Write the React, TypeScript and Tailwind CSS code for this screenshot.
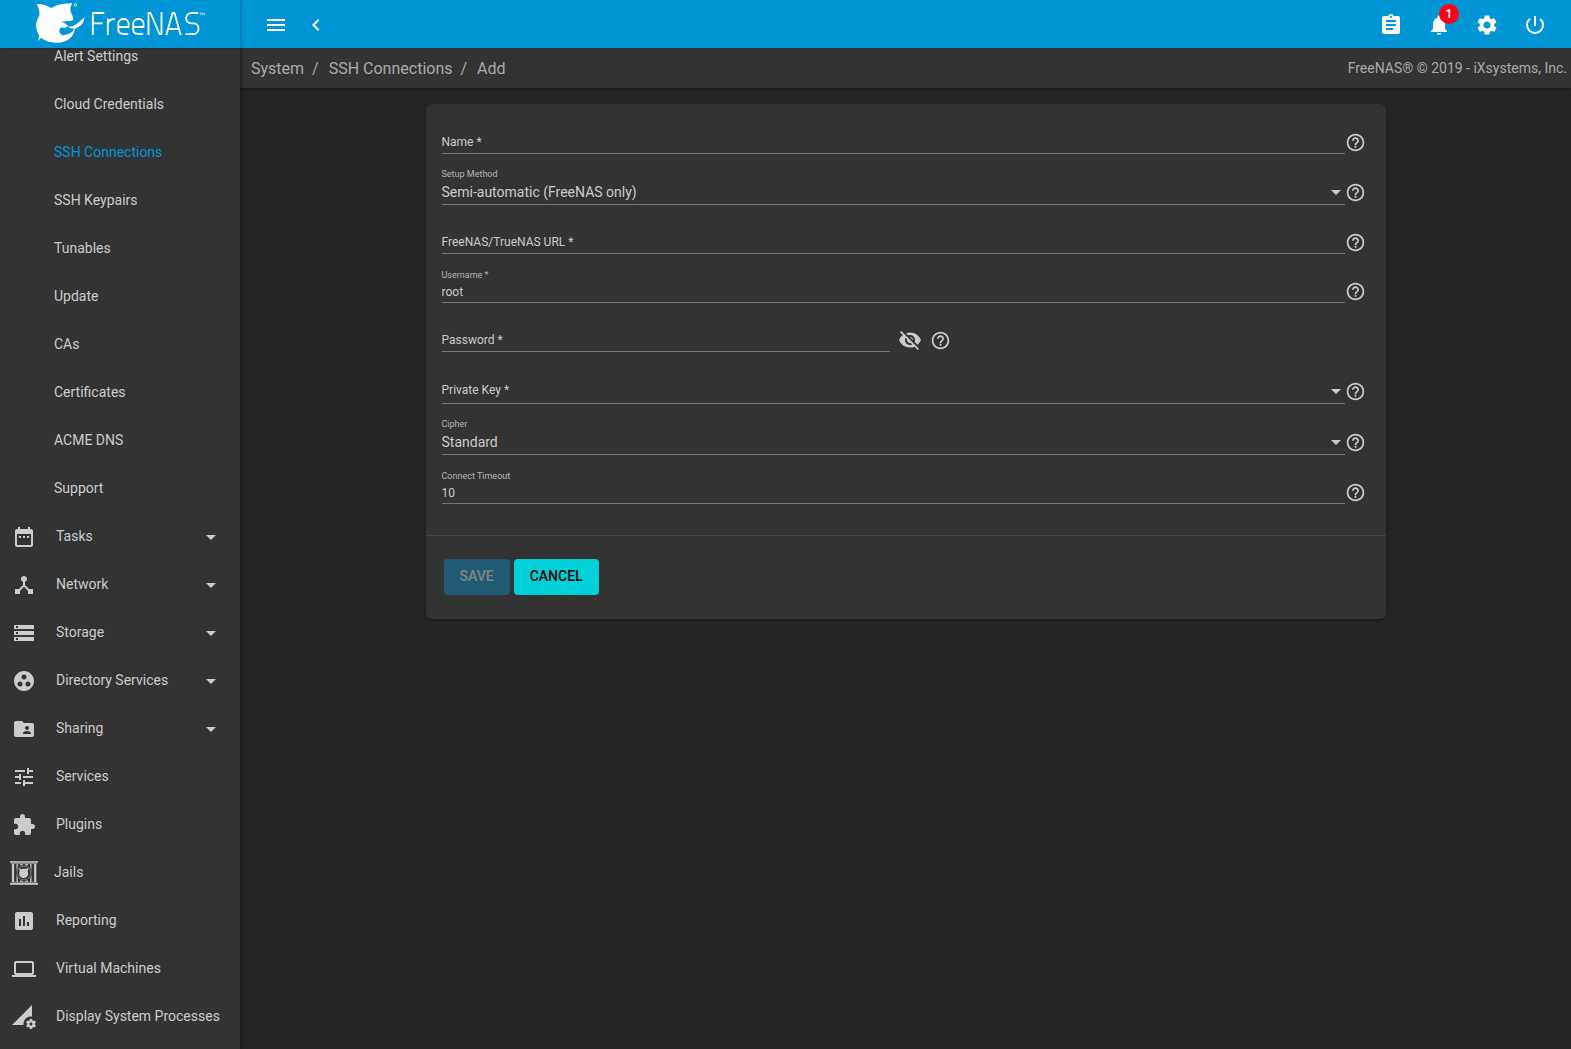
import type { ReactNode } from 'react';
import type { IconType } from 'react-icons';
import {
  MdArrowDropDown,
  MdAssessment,
  MdAssignment,
  MdChevronLeft,
  MdDateRange,
  MdDeviceHub,
  MdExtension,
  MdFolderShared,
  MdGroupWork,
  MdHelpOutline,
  MdLaptop,
  MdMenu,
  MdNotifications,
  MdPermDataSetting,
  MdPowerSettingsNew,
  MdSettings,
  MdStorage,
  MdTune,
  MdVisibilityOff,
} from 'react-icons/md';

const systemLinks = [
  'Alert Settings',
  'Cloud Credentials',
  'SSH Connections',
  'SSH Keypairs',
  'Tunables',
  'Update',
  'CAs',
  'Certificates',
  'ACME DNS',
  'Support',
];

interface Section {
  label: string;
  icon?: IconType;
  expandable?: boolean;
}

const sections: Section[] = [
  { label: 'Tasks', icon: MdDateRange, expandable: true },
  { label: 'Network', icon: MdDeviceHub, expandable: true },
  { label: 'Storage', icon: MdStorage, expandable: true },
  { label: 'Directory Services', icon: MdGroupWork, expandable: true },
  { label: 'Sharing', icon: MdFolderShared, expandable: true },
  { label: 'Services', icon: MdTune },
  { label: 'Plugins', icon: MdExtension },
  { label: 'Jails' },
  { label: 'Reporting', icon: MdAssessment },
  { label: 'Virtual Machines', icon: MdLaptop },
  { label: 'Display System Processes', icon: MdPermDataSetting },
];

function JailIcon() {
  return (
    <svg width="28" height="24" viewBox="0 0 28 24" fill="none" stroke="currentColor">
      <path d="M0 1h28M0 22.900h28" strokeWidth="1.600" />
      <path d="M1 2.600h26M1 21.200h26" strokeWidth="1" opacity=".6" />
      <path d="M3 3v18M25.200 3v18" strokeWidth="2.200" />
      <path d="M7.200 3v18M20.800 3v18" strokeWidth="1.600" opacity=".8" />
      <path d="M11.500 3v18M16.500 3v18" strokeWidth="2.400" />
      <circle cx="14" cy="12" r="8" fill="#333" stroke="none" />
      <circle cx="14" cy="12" r="6.900" strokeWidth=".8" opacity=".6" />
      <path
        d="M9.200 7.200l2.600 1c1.300-.6 2.600-.6 3.600-.2l3.200-1.200-.9 3.200c1.400 4-.4 7-3.800 7-3.600 0-5.700-3.200-4.200-6.800z"
        fill="currentColor"
        stroke="none"
      />
    </svg>
  );
}

function Logo() {
  return (
    <a
      href="#dashboard"
      aria-label="FreeNAS"
      className="flex h-12 w-60 shrink-0 items-center pl-9 text-white shadow-[1px_0_3px_rgba(0,0,0,0.25)]"
    >
      <svg width="170" height="48" viewBox="0 0 170 48" fill="none">
        <path
          d="M.5 4C5 3.600 10 5 15.500 8C21 4.500 28 3.200 36.300 3.300C34.200 6.500 34 10 34.800 12C36.300 14.500 37 17 37.300 20C33 21.800 28.500 20.700 25.500 22.200C29 22.600 30.500 24.500 33 26.800C39 26.500 42.500 22.500 48.300 17.500C48.500 22.500 44.500 26.800 39 28.500C38.500 36 31.500 42.600 21 42.800C14 42.800 8 40.500 5.300 37.800L2 41L3.300 36C1.500 33 0 28.500 0 25.500C.2 21.500 2 17.500 3.500 15C3.500 11 2.500 7 .5 4Z"
          fill="currentColor"
        />
        <path
          d="M25 27.300C22.500 30 22.800 33.500 26.500 35.300C32 34.800 36.800 32.500 38.500 28.800C35 28.800 33 28 31.500 26.300C30 27.800 27.500 28.200 25 27.300Z"
          fill="#0095d5"
        />
        <circle cx="39.500" cy="5" r="1.300" stroke="currentColor" strokeWidth=".8" />
        <g stroke="currentColor" strokeWidth="1.800" strokeLinejoin="round">
          <path d="M56.800 35V13h11.500M56.800 23.300h10" />
          <path d="M71.800 35V18.500M71.800 25c0-4.300 2-6 7-6" />
          <path d="M82.300 27h10.300V23.500c0-6-10.300-6-10.300 0v6c0 4.200 2.500 4.600 10 4.600" />
          <path d="M97.200 27h10.300V23.500c0-6-10.300-6-10.300 0v6c0 4.200 2.500 4.600 10 4.600" />
          <path d="M112.500 35V13h2l9 21h2V12" />
          <path d="M130.300 35l6.200-22h2l6.200 22M132.500 29h10.500" />
          <path d="M162 13h-6c-7.500 0-8 10.300-.5 10.300h2c7 0 6.500 10.900-.5 10.900h-7.500" />
        </g>
        <path d="M163.300 12.800h2.200M164.400 12.800v2.500M166.300 15.300v-2.500l1 1.500 1-1.500v2.500" stroke="currentColor" strokeWidth=".5" />
      </svg>
    </a>
  );
}

function TopButton({ label, children }: { label: string; children: ReactNode }) {
  return (
    <button type="button" aria-label={label} className="relative flex h-12 w-12 items-center justify-center pt-0.5">
      {children}
    </button>
  );
}

function Sidebar() {
  return (
    <nav className="relative z-10 w-60 shrink-0 overflow-hidden bg-[#333] text-sm text-[#ccc] shadow-[1px_0_4px_rgba(0,0,0,0.5)]">
      {/* list is scrolled one third of a row under the top bar */}
      <ul className="-mt-4">
        {systemLinks.map((label) => (
          <li key={label}>
            <a
              href="#system"
              className={`flex h-12 items-center pl-[54px] ${label === 'SSH Connections' ? 'text-[#0095d5]' : ''}`}
            >
              {label}
            </a>
          </li>
        ))}
        {sections.map(({ label, icon: Icon, expandable }) => (
          <li key={label}>
            <a href="#section" className={`flex h-12 items-center ${Icon ? 'gap-5 pl-3' : 'gap-4 pl-2.5'}`}>
              <span className="pt-0.5">{Icon ? <Icon size={24} /> : <JailIcon />}</span>
              <span className="flex-1">{label}</span>
              {expandable && <MdArrowDropDown size={24} className="mt-0.5 mr-[17px]" />}
            </a>
          </li>
        ))}
      </ul>
    </nav>
  );
}

function Help() {
  return (
    <button type="button" aria-label="Help" className="shrink-0">
      <MdHelpOutline size={21} />
    </button>
  );
}

interface FieldProps {
  id: string;
  label: string;
  value?: string;
  type?: string;
}

function TextControl({ id, label, value, type = 'text' }: FieldProps) {
  return (
    <div className="relative flex h-8 flex-1 items-end border-b border-[#757575]">
      <label
        htmlFor={id}
        className={`pointer-events-none absolute left-0 ${value ? 'bottom-[21px] text-[9px] leading-3 text-[#b5b5b5]' : 'bottom-[3px] text-xs'}`}
      >
        {label}
      </label>
      <input id={id} type={type} defaultValue={value} className="h-5 w-full bg-transparent text-xs outline-none" />
    </div>
  );
}

function TextField(props: FieldProps) {
  return (
    <div className="flex h-[49px] items-end">
      <TextControl {...props} />
      <div className="mb-px flex">
        <Help />
      </div>
    </div>
  );
}

function SelectField({ id, label, value }: FieldProps) {
  return (
    <div className={`flex items-end ${value ? 'h-[51px]' : 'h-[52px]'}`}>
      <div className="relative flex h-9 flex-1 items-end border-b border-[#757575]">
        <label
          htmlFor={id}
          className={`pointer-events-none absolute left-0 ${value ? 'bottom-6 text-[9px] leading-3 text-[#b5b5b5]' : 'bottom-[5px] text-xs'}`}
        >
          {label}
        </label>
        <select id={id} defaultValue={value} className="h-6 w-full appearance-none bg-transparent text-sm outline-none">
          <option value={value}>{value}</option>
        </select>
        <MdArrowDropDown size={24} className="pointer-events-none absolute right-[-3px] bottom-0" />
      </div>
      <div className="mb-0.5 flex">
        <Help />
      </div>
    </div>
  );
}

function ConnectionForm() {
  return (
    <form className="mx-auto max-w-[960px] rounded-md bg-[#333] text-[#ccc] shadow-[0_1px_3px_rgba(0,0,0,0.4)]">
      <div className="border-b border-[#474747] pt-px pr-5 pb-[31px] pl-4">
        <TextField id="name" label="Name *" />
        <SelectField id="setup" label="Setup Method" value="Semi-automatic (FreeNAS only)" />
        <TextField id="url" label="FreeNAS/TrueNAS URL *" />
        <TextField id="username" label="Username *" value="root" />
        <div className="flex h-[49px] items-end">
          <div className="flex w-1/2 pr-3.5">
            <TextControl id="password" label="Password *" type="password" />
          </div>
          <div className="-ml-1.5 flex items-center gap-2">
            <button type="button" aria-label="Show password">
              <MdVisibilityOff size={24} />
            </button>
            <Help />
          </div>
        </div>
        <SelectField id="key" label="Private Key *" />
        <SelectField id="cipher" label="Cipher" value="Standard" />
        <TextField id="timeout" label="Connect Timeout" value="10" />
      </div>
      <div className="flex gap-1 px-[18px] pt-[23px] pb-6 text-sm font-medium">
        <button type="submit" disabled className="h-9 rounded-sm bg-[#215a75] px-4 pb-0.5 text-[#858585]">
          SAVE
        </button>
        <button type="button" className="h-9 rounded-sm bg-[#00d0d8] px-4 pb-0.5 text-black">
          CANCEL
        </button>
      </div>
    </form>
  );
}

export default function App() {
  return (
    <div className="flex h-screen flex-col overflow-hidden bg-[#242424] font-['Roboto',sans-serif]">
      <header className="relative z-20 flex h-12 shrink-0 items-center bg-[#0095d5] text-white">
        <Logo />
        <div className="flex flex-1 items-center gap-4 pt-0.5 pl-6">
          <button type="button" aria-label="Toggle menu">
            <MdMenu size={24} />
          </button>
          <button type="button" aria-label="Collapse menu">
            <MdChevronLeft size={24} />
          </button>
        </div>
        <div className="flex pr-3">
          <TopButton label="Tasks">
            <MdAssignment size={24} />
          </TopButton>
          <TopButton label="Notifications">
            <MdNotifications size={24} />
            <span className="absolute top-1 right-1 flex h-5 w-5 items-center justify-center rounded-full bg-[#ff0016] text-xs font-semibold">
              1
            </span>
          </TopButton>
          <TopButton label="Settings">
            <MdSettings size={24} />
          </TopButton>
          <TopButton label="Power">
            <MdPowerSettingsNew size={24} />
          </TopButton>
        </div>
      </header>
      <div className="flex min-h-0 flex-1">
        <Sidebar />
        <main className="flex-1">
          <div className="flex h-10 items-center justify-between bg-[#333] pr-1 pl-[11px] text-[#aaa] shadow-[0_1px_3px_rgba(0,0,0,0.4)]">
            <div className="flex gap-2 pt-0.5">
              <a href="#system">System</a>
              <span className="mr-0.5">/</span>
              <a href="#ssh">SSH Connections</a>
              <span className="mr-0.5">/</span>
              <span>Add</span>
            </div>
            <p className="text-sm">FreeNAS® © 2019 - iXsystems, Inc.</p>
          </div>
          <div className="p-4">
            <ConnectionForm />
          </div>
        </main>
      </div>
    </div>
  );
}
